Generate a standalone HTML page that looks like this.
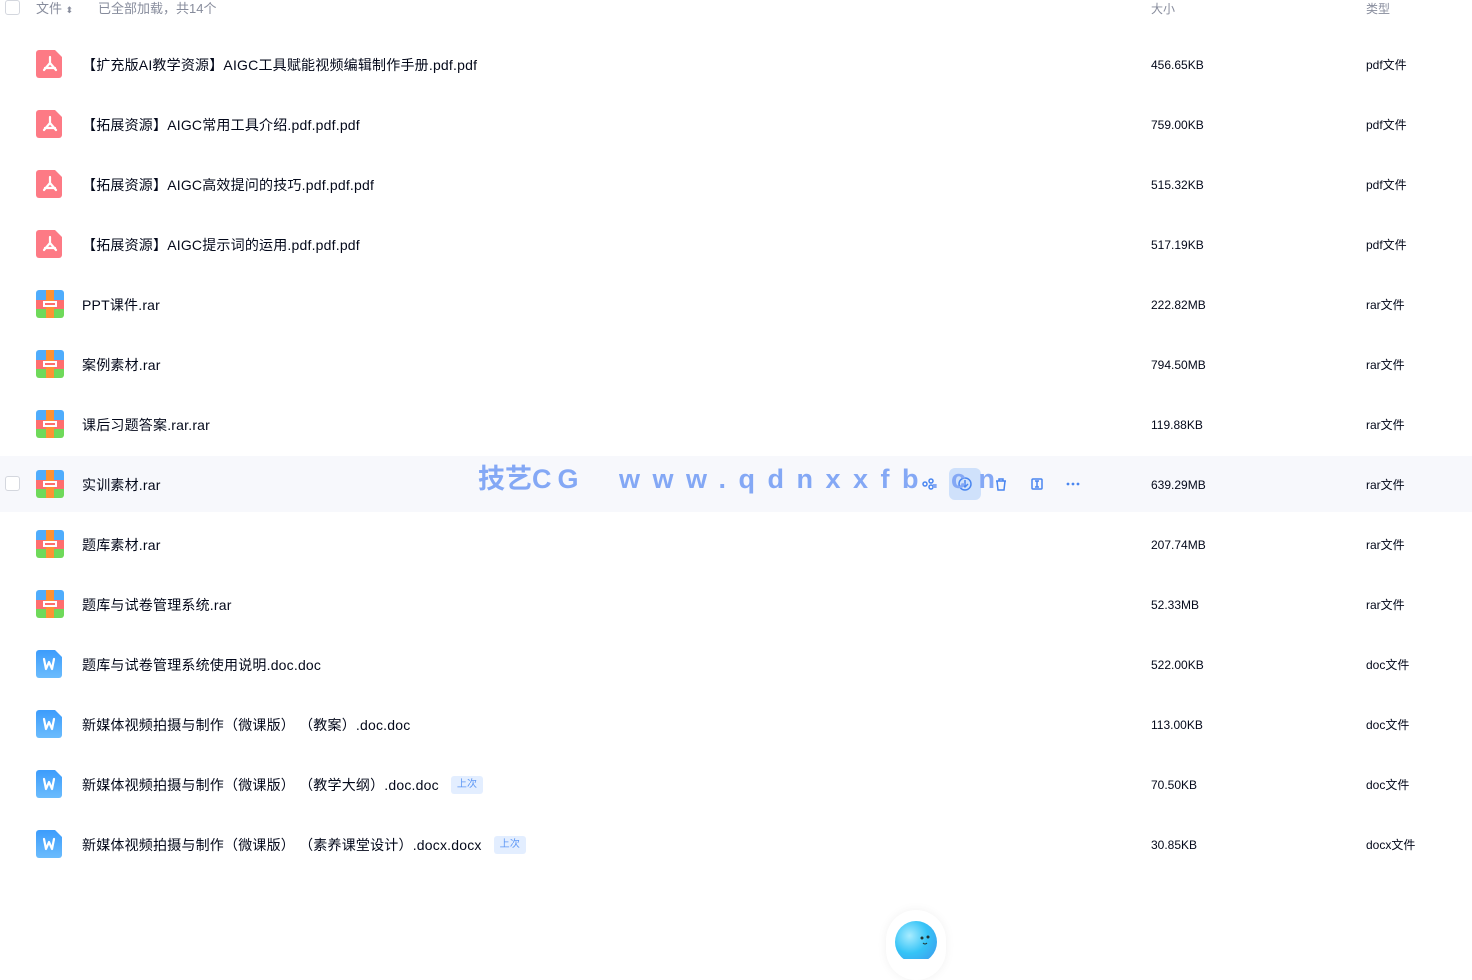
<!DOCTYPE html>
<html><head><meta charset="utf-8"><style>
*{margin:0;padding:0;box-sizing:border-box}
body{width:1472px;height:959px;background:#fff;position:relative;overflow:hidden;font-family:"Liberation Sans","Noto Sans CJK SC",sans-serif;color:#03081a}
.hd{position:absolute;top:1px;height:18px;font-size:13px;color:#878c9c;line-height:16px}
.row{position:absolute;left:0;width:1472px;height:56px}
.row.h{background:#f7f8fc}
.ic{position:absolute;left:36px;top:14px;width:28px;height:28px}
.nm{position:absolute;left:82px;top:1px;line-height:56px;font-size:14px;white-space:nowrap;letter-spacing:0.2px}
.sz,.tp{position:absolute;top:1px;line-height:56px;font-size:12px}
.sz{left:1151px}.tp{left:1366px}
.tag{display:inline-block;margin-left:12px;background:#e3eeff;color:#5d97f5;font-size:10px;line-height:18px;height:18px;padding:0 6px;border-radius:3px;vertical-align:middle;position:relative;top:-1px}
.cb{position:absolute;left:5px;width:15px;height:15px;border:1px solid #d4d7de;border-radius:3px;background:#fff}
.wm{position:absolute;top:462px;font-size:27px;font-weight:bold;color:#84a8f5;white-space:nowrap;line-height:34px}
</style></head><body>
<div class="cb" style="top:0"></div>
<div class="hd" style="left:36px">文件 <span style="font-size:9px">⬍</span></div>
<div class="hd" style="left:98px">已全部加载，共14个</div>
<div class="hd" style="left:1151px;font-size:12px">大小</div>
<div class="hd" style="left:1366px;font-size:12px">类型</div>

<svg width="0" height="0" style="position:absolute"><defs>
<symbol id="pdf" viewBox="0 0 28 28"><path d="M3 0h16l7 7v18a3 3 0 0 1-3 3H3a3 3 0 0 1-3-3V3a3 3 0 0 1 3-3z" fill="#fd7a85"/><path d="M14 7v6M14 13l-6 7M14 13l6 7M9 18h10" stroke="#fff" stroke-width="2.2" fill="none" stroke-linecap="round"/></symbol>
<symbol id="rar" viewBox="0 0 28 28"><clipPath id="cr"><rect x="0" y="0" width="28" height="28" rx="3"/></clipPath><g clip-path="url(#cr)"><rect x="0" y="0" width="30" height="10" fill="#4facfc"/><rect x="0" y="10" width="30" height="9" fill="#fe6e6e"/><rect x="0" y="19" width="30" height="10" fill="#6fd95a"/><rect x="10" y="0" width="8" height="30" fill="#fd9234"/><rect x="7" y="11" width="14" height="6" fill="#fff"/><rect x="9" y="13" width="10" height="2" fill="#fe6e6e"/></g></symbol>
<symbol id="doc" viewBox="0 0 28 28"><defs><linearGradient id="gd" x1="0" y1="0" x2="0" y2="1"><stop offset="0" stop-color="#3c9cfc"/><stop offset="1" stop-color="#6bbcfd"/></linearGradient></defs><path d="M3 0h16l7 7v18a3 3 0 0 1-3 3H3a3 3 0 0 1-3-3V3a3 3 0 0 1 3-3z" fill="url(#gd)"/><path d="M8 9l2 10 3-7 3 7 2-10" stroke="#fff" stroke-width="2.2" fill="none" stroke-linejoin="round" stroke-linecap="round"/></symbol>
</defs></svg>

<div class="row" style="top:36px"><svg class="ic"><use href="#pdf"/></svg><div class="nm">【扩充版AI教学资源】AIGC工具赋能视频编辑制作手册.pdf.pdf</div><div class="sz">456.65KB</div><div class="tp">pdf文件</div></div>
<div class="row" style="top:96px"><svg class="ic"><use href="#pdf"/></svg><div class="nm">【拓展资源】AIGC常用工具介绍.pdf.pdf.pdf</div><div class="sz">759.00KB</div><div class="tp">pdf文件</div></div>
<div class="row" style="top:156px"><svg class="ic"><use href="#pdf"/></svg><div class="nm">【拓展资源】AIGC高效提问的技巧.pdf.pdf.pdf</div><div class="sz">515.32KB</div><div class="tp">pdf文件</div></div>
<div class="row" style="top:216px"><svg class="ic"><use href="#pdf"/></svg><div class="nm">【拓展资源】AIGC提示词的运用.pdf.pdf.pdf</div><div class="sz">517.19KB</div><div class="tp">pdf文件</div></div>
<div class="row" style="top:276px"><svg class="ic"><use href="#rar"/></svg><div class="nm">PPT课件.rar</div><div class="sz">222.82MB</div><div class="tp">rar文件</div></div>
<div class="row" style="top:336px"><svg class="ic"><use href="#rar"/></svg><div class="nm">案例素材.rar</div><div class="sz">794.50MB</div><div class="tp">rar文件</div></div>
<div class="row" style="top:396px"><svg class="ic"><use href="#rar"/></svg><div class="nm">课后习题答案.rar.rar</div><div class="sz">119.88KB</div><div class="tp">rar文件</div></div>
<div class="row h" style="top:456px"><div class="cb" style="top:20px"></div><svg class="ic"><use href="#rar"/></svg><div class="nm">实训素材.rar</div><div class="sz">639.29MB</div><div class="tp">rar文件</div>
<div style="position:absolute;left:949px;top:12px;width:32px;height:32px;background:#cfe1fb;border-radius:6px"></div>
<svg style="position:absolute;left:920px;top:18px" width="160" height="20" viewBox="0 0 160 20"><g fill="none" stroke="#4a86f0" stroke-width="1.5"><circle cx="5" cy="10" r="2"/><circle cx="11" cy="7" r="2"/><circle cx="11" cy="13" r="2"/><circle cx="45" cy="10" r="6"/><path d="M45 6v7M42 10l3 3 3-3"/><path d="M76 7h10M79 7v-2h4v2M77 7l1 9h6l1-9"/><rect x="112" y="5" width="10" height="10" rx="1"/><path d="M117 7v6M115 7h4M115 13h4"/></g><g fill="#4a86f0"><circle cx="148" cy="10" r="1.4"/><circle cx="153" cy="10" r="1.4"/><circle cx="158" cy="10" r="1.4"/></g></svg>
</div>
<div class="wm" style="left:478px;letter-spacing:0px">技艺<span style="letter-spacing:6px">CG</span></div>
<div class="wm" style="left:619px;letter-spacing:12.5px">www.qdnxxfb.cn</div>
<div class="row" style="top:516px"><svg class="ic"><use href="#rar"/></svg><div class="nm">题库素材.rar</div><div class="sz">207.74MB</div><div class="tp">rar文件</div></div>
<div class="row" style="top:576px"><svg class="ic"><use href="#rar"/></svg><div class="nm">题库与试卷管理系统.rar</div><div class="sz">52.33MB</div><div class="tp">rar文件</div></div>
<div class="row" style="top:636px"><svg class="ic"><use href="#doc"/></svg><div class="nm">题库与试卷管理系统使用说明.doc.doc</div><div class="sz">522.00KB</div><div class="tp">doc文件</div></div>
<div class="row" style="top:696px"><svg class="ic"><use href="#doc"/></svg><div class="nm">新媒体视频拍摄与制作（微课版） （教案）.doc.doc</div><div class="sz">113.00KB</div><div class="tp">doc文件</div></div>
<div class="row" style="top:756px"><svg class="ic"><use href="#doc"/></svg><div class="nm">新媒体视频拍摄与制作（微课版） （教学大纲）.doc.doc<span class="tag">上次</span></div><div class="sz">70.50KB</div><div class="tp">doc文件</div></div>
<div class="row" style="top:816px"><svg class="ic"><use href="#doc"/></svg><div class="nm">新媒体视频拍摄与制作（微课版） （素养课堂设计）.docx.docx<span class="tag">上次</span></div><div class="sz">30.85KB</div><div class="tp">docx文件</div></div>

<div style="position:absolute;left:886px;top:910px;width:60px;height:70px;border-radius:30px;background:#fff;box-shadow:0 0 10px rgba(0,0,0,0.06)"></div>
<svg style="position:absolute;left:894px;top:918px" width="46" height="41" viewBox="0 0 46 41"><defs><radialGradient id="bl" cx="0.35" cy="0.35" r="0.7"><stop offset="0" stop-color="#a8ecff"/><stop offset="0.6" stop-color="#36c4f7"/><stop offset="1" stop-color="#3aa8f0"/></radialGradient></defs><circle cx="22" cy="24" r="21" fill="url(#bl)"/><circle cx="28" cy="20" r="1.5" fill="#233"/><circle cx="34" cy="19" r="1.5" fill="#233"/><path d="M29 25q2 2 4 0" stroke="#233" fill="none" stroke-width="1"/></svg>
</body></html>
